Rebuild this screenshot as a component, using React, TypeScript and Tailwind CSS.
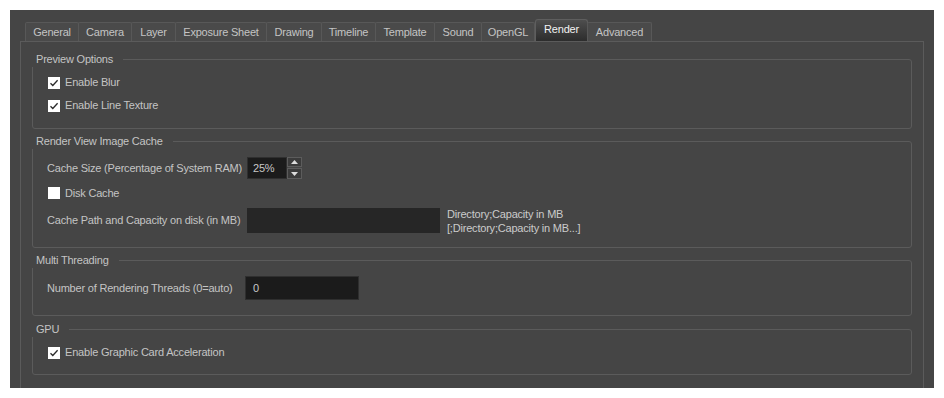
import type { ReactNode } from "react";

const tabs: { label: string; w: string }[] = [
  { label: "General", w: "w-[54px]" },
  { label: "Camera", w: "w-[54px]" },
  { label: "Layer", w: "w-[45px]" },
  { label: "Exposure Sheet", w: "w-[92px]" },
  { label: "Drawing", w: "w-[56px]" },
  { label: "Timeline", w: "w-[55px]" },
  { label: "Template", w: "w-[60px]" },
  { label: "Sound", w: "w-[48px]" },
  { label: "OpenGL", w: "w-[54px]" },
  { label: "Render", w: "w-[53px]" },
  { label: "Advanced", w: "w-[65px]" },
];

function Checkbox({ checked }: { checked: boolean }) {
  return (
    <span className="flex h-[12px] w-[12px] shrink-0 items-center justify-center bg-white">
      {checked && (
        <svg width="12" height="12" viewBox="0 0 12 12">
          <path d="M2.5 6.2 L4.8 8.5 L9.6 3.3" fill="none" stroke="#2a2a2a" strokeWidth="1.3" />
        </svg>
      )}
    </span>
  );
}

function CheckRow({ label, checked }: { label: string; checked: boolean }) {
  return (
    <div className="flex h-[23px] items-center gap-[5px] pl-[1px]">
      <Checkbox checked={checked} />
      <span>{label}</span>
    </div>
  );
}

function GroupBox({ title, className, children }: { title: string; className: string; children: ReactNode }) {
  return (
    <div className={`relative rounded-[3px] border border-[#5b5b5b] pl-[14px] ${className}`}>
      <span className="absolute -left-px -top-[8px] bg-[#454545] pl-[4px] pr-[10px] leading-[15px] text-[#c4c4c4]">
        {title}
      </span>
      {children}
    </div>
  );
}

function SpinBox() {
  return (
    <div className="flex h-[22px]">
      <div className="flex w-[40px] items-center border border-[#2f2f2f] bg-[#1b1b1b] pl-[5px] text-[#c8c8c8]">25%</div>
      <div className="flex w-[15px] flex-col gap-px">
        <div className="flex h-[10px] items-center justify-center border border-[#5c5c5c] bg-[#3b3b3b]">
          <svg width="7" height="4" viewBox="0 0 7 4">
            <path d="M0 4 L3.5 0 L7 4 Z" fill="#dcdcdc" />
          </svg>
        </div>
        <div className="flex h-[11px] items-center justify-center border border-[#5c5c5c] bg-[#3b3b3b]">
          <svg width="7" height="4" viewBox="0 0 7 4">
            <path d="M0 0 L3.5 4 L7 0 Z" fill="#dcdcdc" />
          </svg>
        </div>
      </div>
    </div>
  );
}

export default function App() {
  return (
    <div
      className="min-h-screen whitespace-nowrap bg-white pl-[10px] pt-[10px] text-[11px] tracking-[-0.2px] text-[#c4c4c4]"
      style={{ fontFamily: '"Liberation Sans", Arial, sans-serif' }}
    >
      <div className="flex h-[378px] w-[924px] flex-col overflow-hidden bg-[#454545] px-[10px] pt-[9px]">
        <div className="flex h-[22px] items-end pl-[5px]">
          {tabs.map((t) =>
            t.label === "Render" ? (
              <div
                key={t.label}
                className={`flex h-[22px] ${t.w} items-center justify-center rounded-t-[3px] border border-b-0 border-[#5e5e5e] bg-gradient-to-b from-[#4e4e4e] to-[#2d2d2d] pb-[3px] text-[#f2f2f2]`}
              >
                {t.label}
              </div>
            ) : (
              <div
                key={t.label}
                className={`-ml-px flex h-[19px] ${t.w} items-center justify-center rounded-t-[2px] border border-b-0 border-[#585858] bg-[#4a4a4a] first:ml-0`}
              >
                {t.label}
              </div>
            ),
          )}
        </div>

        <div className="flex-1 border-x border-t border-[#5b5b5b] px-[11px] pt-[17px]">
          <GroupBox title="Preview Options" className="pb-[11px] pt-[11px]">
            <CheckRow label="Enable Blur" checked />
            <CheckRow label="Enable Line Texture" checked />
          </GroupBox>

          <GroupBox title="Render View Image Cache" className="mt-[12px] pb-[14px] pt-[15px]">
            <div className="flex h-[22px] items-center">
              <span className="w-[200px] shrink-0">Cache Size (Percentage of System RAM)</span>
              <SpinBox />
            </div>
            <div className="mt-[2px] flex h-[24px] items-center gap-[5px] pl-[1px]">
              <Checkbox checked={false} />
              <span>Disk Cache</span>
            </div>
            <div className="mt-[3px] flex h-[25px] items-center">
              <span className="w-[200px] shrink-0">Cache Path and Capacity on disk (in MB)</span>
              <div className="h-[25px] w-[193px] bg-[#262626]" />
              <div className="ml-[7px] leading-[14px] text-[#cbcbcb]">
                <div>Directory;Capacity in MB</div>
                <div>[;Directory;Capacity in MB...]</div>
              </div>
            </div>
          </GroupBox>

          <GroupBox title="Multi Threading" className="mt-[12px] pb-[15px] pt-[15px]">
            <div className="flex h-[24px] items-center">
              <span className="w-[198px] shrink-0">Number of Rendering Threads (0=auto)</span>
              <div className="flex h-[24px] w-[114px] items-center border border-[#2f2f2f] bg-[#1b1b1b] pl-[7px] text-[#c8c8c8]">
                0
              </div>
            </div>
          </GroupBox>

          <GroupBox title="GPU" className="mt-[13px] pb-[10px] pt-[11px]">
            <CheckRow label="Enable Graphic Card Acceleration" checked />
          </GroupBox>
        </div>
      </div>
    </div>
  );
}
